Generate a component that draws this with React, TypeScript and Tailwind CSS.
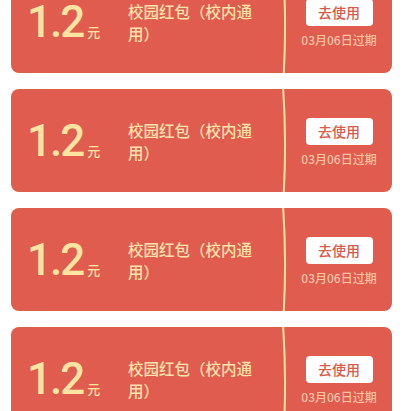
const font = { fontFamily: '"Liberation Sans", "Noto Sans CJK SC", sans-serif' };

function Divider() {
  return (
    <svg width="6" height="103" viewBox="0 0 6 103" className="shrink-0">
      <path d="M1.2 0 Q4.6 51.5 1.8 103" fill="none" stroke="#fce2a2" strokeWidth="2" />
    </svg>
  );
}

function Coupon() {
  return (
    <div className="flex h-[103px] items-center rounded-[8px] bg-[#df5c4e]">
      <div className="flex w-[271px] items-center pl-[16px]">
        <div className="flex w-[101px] items-baseline text-[#fde4a1]">
          <span className="font-['Roboto',sans-serif] text-[44px] font-medium leading-none tracking-[-2px]">1.2</span>
          <span className="ml-[4px] font-['Noto_Sans_CJK_SC',sans-serif] text-[13px] font-medium leading-none">元</span>
        </div>
        <p className="w-[132px] font-['Noto_Sans_CJK_SC',sans-serif] text-[15.5px] font-medium leading-[22px] text-[#fbe1ac]">
          校园红包（校内通用）
        </p>
      </div>
      <Divider />
      <div className="flex flex-1 flex-col items-center pr-[2px] pt-[3px]">
        <button className="flex h-[27px] w-[67px] items-center justify-center rounded-[4px] bg-white font-['Noto_Sans_CJK_SC',sans-serif] text-[14px] font-medium text-[#d75a4d]">
          去使用
        </button>
        <span className="mt-[6px] font-['Noto_Sans_CJK_SC',sans-serif] text-[12px] font-medium leading-[16px] text-[#f7c1a4]">03月06日过期</span>
      </div>
    </div>
  );
}

export default function App() {
  return (
    <div className="h-[411px] w-[408px] overflow-hidden bg-white" style={font}>
      <div className="-mt-[30px] flex flex-col gap-[16px] pl-[11px] pr-[16px]">
        <Coupon />
        <Coupon />
        <Coupon />
        <Coupon />
      </div>
    </div>
  );
}
